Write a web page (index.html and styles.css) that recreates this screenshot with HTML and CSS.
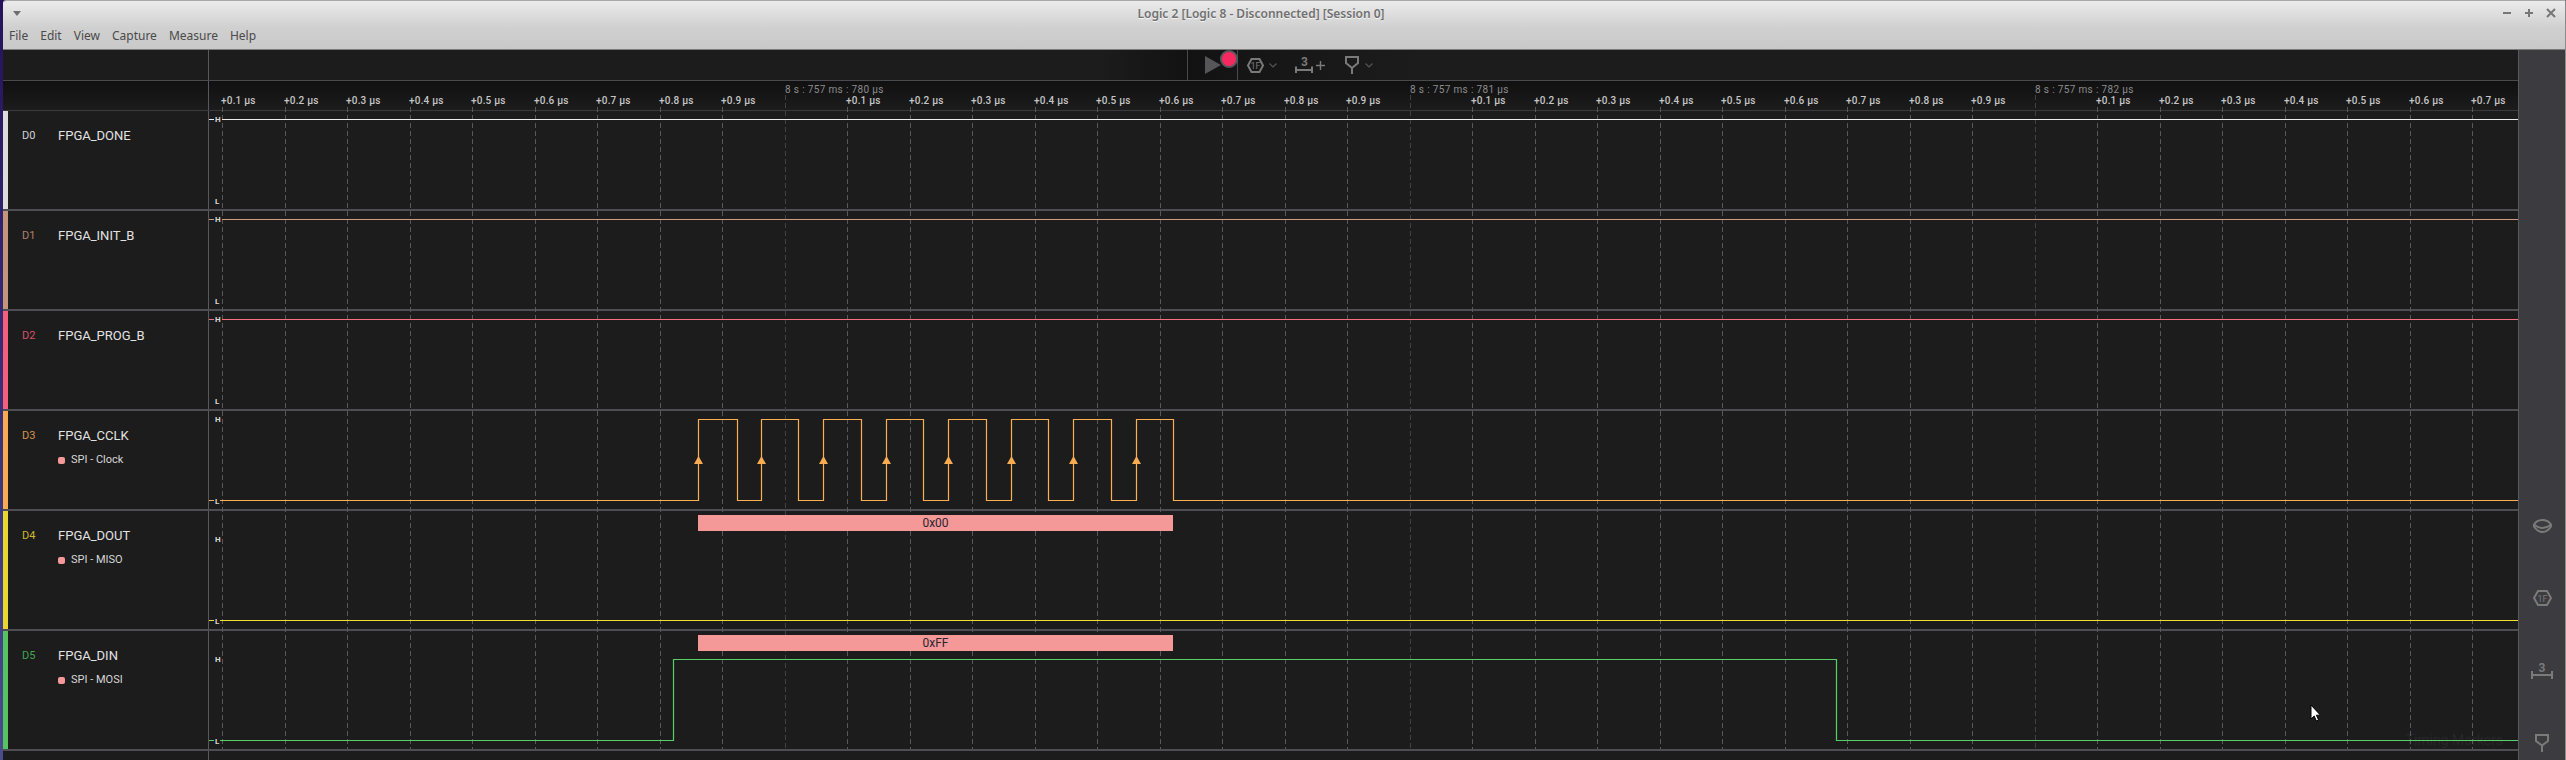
FILE: index.html
```html
<!DOCTYPE html>
<html lang="en">
<head>
    <meta charset="UTF-8">
    <title>Logic 2 [Logic 8 - Disconnected] [Session 0]</title>
    <link rel="stylesheet" href="styles.css">
</head>
<body>
<div class="window">
    <div class="titlebar">
        <div class="title-row">
            <span class="window-menu-arrow"></span>
            <span class="window-title">Logic 2 [Logic 8 - Disconnected] [Session 0]</span>
            <div class="window-buttons">
                <svg width="22" height="12" viewBox="0 0 22 12"><path d="M7 6H15"/></svg>
                <svg width="22" height="12" viewBox="0 0 22 12"><path d="M7 6H15M11 2V10"/></svg>
                <svg width="22" height="12" viewBox="0 0 22 12"><path d="M7 2L15 10M15 2L7 10"/></svg>
            </div>
        </div>
        <div class="menubar">
            <span>File</span>
            <span>Edit</span>
            <span>View</span>
            <span>Capture</span>
            <span>Measure</span>
            <span>Help</span>
        </div>
    </div>

    <div class="main">
        <div class="workspace">
            <div class="toolbar">
                <div class="left-cell"></div>
                <div class="tools">
                    <div class="play-group">
                        <svg class="play-icon" width="16" height="18" viewBox="0 0 16 18"><path d="M0 0L16 9L0 18Z"/></svg>
                        <span class="record-dot"></span>
                    </div>
                    <svg class="icon tool-hex" width="17" height="15" viewBox="0 0 17 15">
                        <path d="M4.5 1H12.5L16 7.5L12.5 14H4.5L1 7.5Z"/>
                        <text x="8.5" y="10.5">1F</text>
                    </svg>
                    <svg class="icon chevron tool-chevron-a" width="8" height="5" viewBox="0 0 8 5"><path d="M0.5 0.5L4 4L7.5 0.5"/></svg>
                    <svg class="icon tool-ruler" width="18" height="22" viewBox="0 0 18 22">
                        <text class="ruler-num" x="9.5" y="14">3</text>
                        <path d="M1 14.5V21M17 14.5V21M1 18H17"/>
                    </svg>
                    <svg class="icon tool-plus" width="9" height="9" viewBox="0 0 9 9"><path d="M0 4.5H9M4.5 0V9"/></svg>
                    <svg class="icon tool-marker" width="14" height="18" viewBox="0 0 14 18"><path d="M1 1H13V7L7 12L1 7ZM7 12V18"/></svg>
                    <svg class="icon chevron tool-chevron-b" width="8" height="5" viewBox="0 0 8 5"><path d="M0.5 0.5L4 4L7.5 0.5"/></svg>
                </div>
            </div>

            <div class="ruler">
                <div class="left-cell"></div>
                <div class="ruler-track" id="rulerTrack"></div>
            </div>

            <div class="channel">
                <div class="left-cell channel-info">
                    <span class="strip strip-d0"></span>
                    <div class="info-text">
                        <div class="info-head"><span class="chan-num num-d0">D0</span><span class="chan-name">FPGA_DONE</span></div>
                    </div>
                </div>
                <div class="wave">
                    <svg class="trace"><path class="stroke-d0" d="M0 8.5H2309"/></svg>
                    <span class="lvl lvl-h">H</span>
                    <span class="lvl lvl-l">L</span>
                </div>
            </div>

            <div class="channel">
                <div class="left-cell channel-info">
                    <span class="strip strip-d1"></span>
                    <div class="info-text">
                        <div class="info-head"><span class="chan-num num-d1">D1</span><span class="chan-name">FPGA_INIT_B</span></div>
                    </div>
                </div>
                <div class="wave">
                    <svg class="trace"><path class="stroke-d1" d="M0 8.5H2309"/></svg>
                    <span class="lvl lvl-h">H</span>
                    <span class="lvl lvl-l">L</span>
                </div>
            </div>

            <div class="channel">
                <div class="left-cell channel-info">
                    <span class="strip strip-d2"></span>
                    <div class="info-text">
                        <div class="info-head"><span class="chan-num num-d2">D2</span><span class="chan-name">FPGA_PROG_B</span></div>
                    </div>
                </div>
                <div class="wave">
                    <svg class="trace"><path class="stroke-d2" d="M0 8.5H2309"/></svg>
                    <span class="lvl lvl-h">H</span>
                    <span class="lvl lvl-l">L</span>
                </div>
            </div>

            <div class="channel">
                <div class="left-cell channel-info">
                    <span class="strip strip-d3"></span>
                    <div class="info-text">
                        <div class="info-head"><span class="chan-num num-d3">D3</span><span class="chan-name">FPGA_CCLK</span></div>
                        <div class="analyzer"><span class="swatch"></span>SPI - Clock</div>
                    </div>
                </div>
                <div class="wave">
                    <svg class="trace">
                        <path class="stroke-d3" d="M0 89.5H489.5V8.5H528.5V89.5H552.5V8.5H589.5V89.5H614.5V8.5H652.5V89.5H677.5V8.5H714.5V89.5H739.5V8.5H777.5V89.5H802.5V8.5H839.5V89.5H864.5V8.5H902.5V89.5H927.5V8.5H964.5V89.5H2309"/>
                        <path class="edge-marks" d="M489.5 45L494 53H485ZM552.5 45L557 53H548ZM614.5 45L619 53H610ZM677.5 45L682 53H673ZM739.5 45L744 53H735ZM802.5 45L807 53H798ZM864.5 45L869 53H860ZM927.5 45L932 53H923Z"/>
                    </svg>
                    <span class="lvl lvl-h">H</span>
                    <span class="lvl lvl-l">L</span>
                </div>
            </div>

            <div class="channel channel-tall">
                <div class="left-cell channel-info">
                    <span class="strip strip-d4"></span>
                    <div class="info-text">
                        <div class="info-head"><span class="chan-num num-d4">D4</span><span class="chan-name">FPGA_DOUT</span></div>
                        <div class="analyzer"><span class="swatch"></span>SPI - MISO</div>
                    </div>
                </div>
                <div class="wave">
                    <svg class="trace"><path class="stroke-d4" d="M0 109.5H2309"/></svg>
                    <span class="lvl lvl-h-tall">H</span>
                    <span class="lvl lvl-l-tall">L</span>
                    <div class="byte-bar">0x00</div>
                </div>
            </div>

            <div class="channel channel-tall">
                <div class="left-cell channel-info">
                    <span class="strip strip-d5"></span>
                    <div class="info-text">
                        <div class="info-head"><span class="chan-num num-d5">D5</span><span class="chan-name">FPGA_DIN</span></div>
                        <div class="analyzer"><span class="swatch"></span>SPI - MOSI</div>
                    </div>
                </div>
                <div class="wave">
                    <svg class="trace"><path class="stroke-d5" d="M0 109.5H464.5V28.5H1627.5V109.5H2309"/></svg>
                    <span class="lvl lvl-h-tall">H</span>
                    <span class="lvl lvl-l-tall">L</span>
                    <div class="byte-bar">0xFF</div>
                    <span class="faded-hint">Timing Markers</span>
                </div>
            </div>

            <div class="bottom-fill">
                <div class="left-cell"></div>
            </div>

            <div class="grid-lines" id="gridLines"></div>

            <svg class="mouse-cursor" width="11" height="18" viewBox="0 0 11 18">
                <path d="M1 1V15L4.2 12L6.4 17L8.6 16L6.4 11.2H10.4Z"/>
            </svg>
        </div>

        <div class="sidebar">
            <div class="side-btn">
                <svg class="icon" width="19" height="14" viewBox="0 0 19 14">
                    <path d="M9.5 1C13 1 16 2.5 18 5.500V7.500C16 10.500 13 13 9.500 13S3 10.500 1 7.500V5.500C3 2.500 6 1 9.500 1Z"/>
                    <path d="M1.500 6C4 8 6.500 9 9.500 9S15 8 17.500 6"/>
                </svg>
            </div>
            <div class="side-btn">
                <svg class="icon" width="19" height="16" viewBox="0 0 19 16">
                    <path d="M5 1H14L18 8L14 15H5L1 8Z"/>
                    <text x="9.5" y="11.5">1F</text>
                </svg>
            </div>
            <div class="side-btn">
                <svg class="icon" width="22" height="24" viewBox="0 0 22 24">
                    <text class="ruler-num" x="11" y="13.500">3</text>
                    <path d="M1 13V21M21 13V21M1 17H21"/>
                </svg>
            </div>
            <div class="side-btn side-btn-last">
                <svg class="icon" width="14" height="18" viewBox="0 0 14 18"><path d="M1 1H13V7L7 11.5L1 7ZM7 11.5V18"/></svg>
            </div>
        </div>
    </div>
</div>
<script src="script.js"></script>
</body>
</html>
```

FILE: styles.css
```css
html, body {
    margin: 0;
    padding: 0;
    height: 100%;
    overflow: hidden;
}

body {
    background: linear-gradient(180deg, #24125f, #4a4c8e);
    font-family: 'Roboto', 'Liberation Sans', sans-serif;
}

.window {
    box-sizing: border-box;
    height: 760px;
    margin-left: 3px;
    border-top: 1px solid #a8a8a8;
    border-right: 1px solid #8a8a8a;
    border-top-left-radius: 3px;
    display: flex;
    flex-direction: column;
    overflow: hidden;
}

/* title bar */
.titlebar {
    height: 49px;
    box-sizing: border-box;
    flex-shrink: 0;
    background: linear-gradient(180deg, #ebebeb 0%, #d0d0d0 55%, #c9c9c9 100%);
    border-bottom: 1px solid #7c7c7c;
    font-family: 'Noto Sans', sans-serif;
}

.title-row {
    height: 24px;
    display: flex;
    align-items: center;
}

.window-menu-arrow {
    width: 0;
    height: 0;
    margin: 0 5px 0 10px;
    border-left: 4px solid transparent;
    border-right: 4px solid transparent;
    border-top: 5px solid #6e6e6e;
}

.window-title {
    flex: 1;
    text-align: center;
    font-size: 12px;
    font-weight: 600;
    color: #707070;
    text-shadow: 0 1px 0 #f4f4f4;
}

.window-buttons {
    display: flex;
    padding-right: 3px;
}

.window-buttons path {
    fill: none;
    stroke: #777;
    stroke-width: 2;
}

.menubar {
    display: flex;
    gap: 12px;
    padding: 3px 0 0 6px;
    font-size: 12px;
    line-height: 16px;
    color: #4a4a4a;
}

/* main area */
.main {
    flex: 1;
    display: flex;
    min-height: 0;
}

.workspace {
    flex: 1;
    position: relative;
    display: flex;
    flex-direction: column;
    background-color: #1c1c1d;
}

.left-cell {
    box-sizing: border-box;
    width: 206px;
    flex-shrink: 0;
    border-right: 1px solid #58585c;
}

.toolbar {
    height: 31px;
    box-sizing: border-box;
    flex-shrink: 0;
    display: flex;
    border-bottom: 1px solid #4a4a4e;
}

.tools {
    flex: 1;
    display: flex;
    align-items: center;
    padding-left: 978px;
    background: linear-gradient(90deg, #1c1c1d 890px, #121213 978px, #151516 1030px, #1c1c1d 1210px);
}

.play-group {
    position: relative;
    box-sizing: border-box;
    width: 51px;
    height: 100%;
    border-left: 1px solid #4a4a4e;
    border-right: 1px solid #4a4a4e;
    display: flex;
    align-items: center;
}

.play-icon {
    margin-left: 17px;
}

.play-icon path {
    fill: #565658;
}

.record-dot {
    position: absolute;
    left: 32px;
    top: 0;
    box-sizing: border-box;
    width: 18px;
    height: 18px;
    border-radius: 50%;
    background-color: #f5285f;
    border: 2px solid #58585c;
}

.icon path {
    fill: none;
    stroke: #7a7a7a;
    stroke-width: 2;
}

.icon text {
    font-family: 'Roboto', sans-serif;
    font-size: 9px;
    fill: #7a7a7a;
    text-anchor: middle;
}

.icon .ruler-num {
    font-size: 12px;
    font-weight: 700;
}

.chevron path {
    stroke: #555;
    stroke-width: 1.2;
}

.tool-hex {
    margin-left: 9px;
}

.tool-chevron-a {
    margin-left: 5px;
}

.tool-ruler {
    margin-left: 18px;
    margin-top: -4px;
}

.tool-plus {
    margin-left: 3px;
}

.tool-plus path {
    stroke-width: 1.4;
}

.tool-marker {
    margin-left: 20px;
}

.tool-chevron-b {
    margin-left: 6px;
}

/* time ruler */
.ruler {
    height: 30px;
    box-sizing: border-box;
    flex-shrink: 0;
    display: flex;
    background: linear-gradient(180deg, #101011, #1c1c1d);
    border-bottom: 1px solid #3a3a3d;
}

.ruler-track {
    flex: 1;
    position: relative;
}

.tick-label {
    position: absolute;
    top: 14px;
    font-size: 10px;
    font-weight: 500;
    line-height: 12px;
    letter-spacing: 0.2px;
    color: #c6c6c6;
    white-space: nowrap;
}

.major-label {
    position: absolute;
    top: 3px;
    font-size: 10px;
    line-height: 12px;
    letter-spacing: 0.35px;
    color: #8c8c8c;
    white-space: nowrap;
}

/* channel rows */
.channel {
    height: 100px;
    box-sizing: border-box;
    flex-shrink: 0;
    display: flex;
    border-bottom: 2px solid #4e4e52;
}

.channel-tall {
    height: 120px;
}

.channel-info {
    display: flex;
}

.strip {
    width: 5px;
    flex-shrink: 0;
}

.strip-d0 { background-color: #dcdcdc; }
.strip-d1 { background-color: #c4957a; }
.strip-d2 { background-color: #f4607c; }
.strip-d3 { background-color: #f8ab50; }
.strip-d4 { background-color: #e8d82e; }
.strip-d5 { background-color: #55c460; }

.info-text {
    padding: 16px 0 0 14px;
}

.info-head {
    display: flex;
    align-items: center;
    height: 16px;
}

.chan-num {
    width: 36px;
    font-size: 11px;
}

.num-d0 { color: #cfd2d6; }
.num-d1 { color: #b08068; }
.num-d2 { color: #d8506a; }
.num-d3 { color: #d8924a; }
.num-d4 { color: #c8ba2a; }
.num-d5 { color: #46a452; }

.chan-name {
    font-size: 13px;
    color: #e2e2e2;
}

.analyzer {
    display: flex;
    align-items: center;
    margin: 9px 0 0 36px;
    font-size: 11px;
    line-height: 16px;
    color: #d6d6d6;
}

.swatch {
    width: 7px;
    height: 7px;
    margin-right: 6px;
    border-radius: 2px;
    background-color: #f59898;
}

.wave {
    flex: 1;
    position: relative;
    min-width: 0;
}

.trace {
    position: absolute;
    z-index: 1;
    left: 0;
    top: 0;
    width: 100%;
    height: 100%;
}

.trace path {
    fill: none;
    stroke-width: 1.2;
}

.trace .edge-marks {
    fill: #f8ab50;
    stroke: none;
}

.stroke-d0 { stroke: #ececec; }
.stroke-d1 { stroke: #d09c80; }
.stroke-d2 { stroke: #f8707f; }
.stroke-d3 { stroke: #fbaf52; }
.stroke-d4 { stroke: #f2e02e; }
.stroke-d5 { stroke: #58d066; }

.lvl {
    position: absolute;
    z-index: 2;
    left: 5px;
    padding: 0 1px;
    font-size: 8px;
    font-weight: 700;
    line-height: 9px;
    color: #d8d8d8;
    background-color: #1c1c1d;
}

.lvl-h { top: 4px; }
.lvl-l { top: 86px; }
.lvl-h-tall { top: 24px; }
.lvl-l-tall { top: 106px; }

.byte-bar {
    position: absolute;
    z-index: 2;
    left: 489px;
    top: 4px;
    width: 475px;
    height: 16px;
    line-height: 16px;
    text-align: center;
    font-size: 12px;
    color: #2a2530;
    background-color: #f59898;
}

.faded-hint {
    position: absolute;
    right: 15px;
    bottom: 0;
    font-size: 14px;
    line-height: 18px;
    color: #272729;
}

.bottom-fill {
    flex: 1;
    display: flex;
}

/* dashed time lines, sit under the traces */
.grid-lines {
    position: absolute;
    left: 206px;
    right: 0;
    top: 57px;
    height: 642px;
}

.grid-line {
    position: absolute;
    top: 0;
    bottom: 0;
    width: 1px;
    background: repeating-linear-gradient(180deg, #58585c 0, #58585c 5px, transparent 5px, transparent 8px);
}

.grid-line-major {
    top: -12px;
    background: repeating-linear-gradient(180deg, #414145 0, #414145 5px, transparent 5px, transparent 8px);
}

.mouse-cursor {
    position: absolute;
    z-index: 3;
    left: 2307px;
    top: 654px;
}

.mouse-cursor path {
    fill: #fff;
    stroke: #000;
    stroke-width: 1;
}

/* right side bar */
.sidebar {
    width: 47px;
    box-sizing: border-box;
    flex-shrink: 0;
    padding-top: 440px;
    background-color: #3c3c40;
    border-left: 1px solid #58585c;
}

.side-btn {
    height: 72px;
    display: flex;
    align-items: center;
    justify-content: center;
}

.side-btn-last {
    height: 54px;
    align-items: flex-start;
    padding-top: 28px;
    box-sizing: border-box;
}
```

FILE: script.js
```js
// time axis: one major tick every 10 minor ticks, 62.5px apart
var FIRST_MAJOR = 576; // 785px on screen, from the left of the track
var STEP = 62.5;
var MAJORS = ['780', '781', '782'];

var track = document.getElementById('rulerTrack');
var grid = document.getElementById('gridLines');

function addLine(x, major) {
    var line = document.createElement('div');
    line.className = major ? 'grid-line grid-line-major' : 'grid-line';
    line.style.left = Math.floor(x) + 'px';
    grid.appendChild(line);
}

function addLabel(x, text, cls) {
    var label = document.createElement('span');
    label.className = cls;
    label.textContent = text;
    label.style.left = Math.floor(x) + 'px';
    track.appendChild(label);
}

for (var m = -1; m < MAJORS.length; m++) {
    var base = FIRST_MAJOR + m * 10 * STEP;
    if (m >= 0) {
        addLine(base, true);
        addLabel(base, '8 s : 757 ms : ' + MAJORS[m] + ' \u00b5s', 'major-label');
    }
    for (var i = 1; i < 10; i++) {
        var x = base + i * STEP;
        if (x < 0 || x > 2300) continue;
        addLine(x, false);
        addLabel(x - 1, '+0.' + i + ' \u00b5s', 'tick-label');
    }
}
```
